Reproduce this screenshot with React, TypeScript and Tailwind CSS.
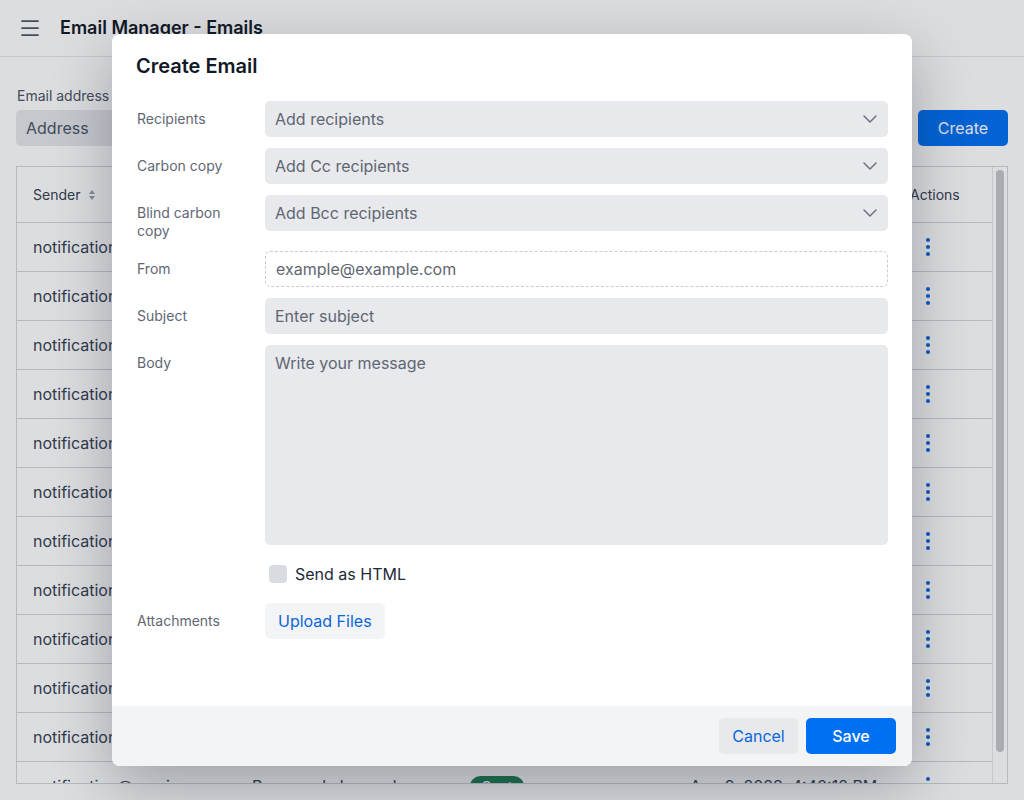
import React from "react";
import { ChevronDown, Menu } from "lucide-react";

const subjects = ["Welcome aboard", "Your weekly report", "Password changed"];

const rows = Array.from({ length: 12 }, (_, i) => ({
  sender: "notification@service.com",
  subject: subjects[i % 3],
  status: "Sent",
  date: `Aug 9, 2023, 4:${29 + i}:12 PM`,
}));

function SortIcon() {
  return (
    <svg width="8" height="12" viewBox="0 0 8 12" className="ml-2 text-gray-400">
      <path d="M4 1 L7 5 H1 Z" fill="currentColor" />
      <path d="M4 11 L7 7 H1 Z" fill="currentColor" />
    </svg>
  );
}

function Kebab() {
  return (
    <div className="flex flex-col items-center gap-[3px]">
      <span className="h-[4px] w-[4px] rounded-full bg-[#0066e0]" />
      <span className="h-[4px] w-[4px] rounded-full bg-[#0066e0]" />
      <span className="h-[4px] w-[4px] rounded-full bg-[#0066e0]" />
    </div>
  );
}

function SelectBox({ placeholder }: { placeholder: string }) {
  return (
    <div className="flex h-9 flex-1 items-center justify-between rounded-[5px] bg-[#e7e9ed] pl-2.5 pr-1.5">
      <span className="text-base text-[#5f6672]">{placeholder}</span>
      <ChevronDown size={24} strokeWidth={1.5} className="text-[#6b7280]" />
    </div>
  );
}

function FormRow({ label, children }: { label: string; children: React.ReactNode }) {
  return (
    <div className="flex items-start">
      <div className="w-[129px] shrink-0 pl-px pr-6 pt-[9px] text-sm leading-[18px] text-[#5f6774]">{label}</div>
      {children}
    </div>
  );
}

export default function App() {
  return (
    <div className="relative h-[800px] overflow-hidden bg-white font-['Inter',sans-serif] text-gray-800">
      {/* page header */}
      <header className="flex h-[57px] items-center border-b border-gray-200 pl-[18px]">
        <Menu size={24} strokeWidth={1.75} className="text-[#4b5563]" />
        <h1 className="ml-[18px] text-lg font-semibold text-[#111827]">Email Manager - Emails</h1>
      </header>

      <main className="px-4 pt-[29px]">
        <div className="flex items-end justify-between">
          <div className="flex flex-col">
            <label className="mb-1 pl-px text-sm leading-5 text-gray-600">Email address</label>
            <div className="flex h-9 w-[320px] items-center rounded-[5px] bg-[#e5e7eb] px-2.5 text-base text-gray-600">
              Address
            </div>
          </div>
          <button className="h-9 w-[90px] rounded-[5px] bg-[#0070f3] text-base text-white">Create</button>
        </div>

        {/* email list */}
        <div className="mt-5 flex h-[618px] overflow-hidden border border-gray-300">
          <div className="flex-1">
            <div className="grid h-[55px] grid-cols-[219px_218px_220px_220px_1fr] items-center text-sm text-gray-700">
              <div className="flex items-center pl-4">
                Sender
                <SortIcon />
              </div>
              <div className="pl-4">Subject</div>
              <div className="pl-4">Status</div>
              <div className="pl-4">Sent at</div>
              <div className="pl-4">Actions</div>
            </div>
            {rows.map((r, i) => (
              <div
                key={i}
                className="grid h-[49px] grid-cols-[219px_218px_220px_220px_1fr] items-center border-t border-gray-300 text-base text-gray-700"
              >
                <div className="truncate pl-4">{r.sender}</div>
                <div className="truncate pl-4">{r.subject}</div>
                <div className="pl-4">
                  <span className="rounded-full bg-[#1f7f55] px-3 py-0.5 text-sm font-medium text-white">{r.status}</span>
                </div>
                <div className="truncate pl-4">{r.date}</div>
                <div className="flex pl-[32px]">
                  <Kebab />
                </div>
              </div>
            ))}
          </div>
          {/* scrollbar */}
          <div className="w-[15px] shrink-0 border-l border-gray-200 pt-[3px] pl-[3px]">
            <div className="h-[582px] w-[8px] rounded-full bg-[#c4c6c8]" />
          </div>
        </div>
      </main>

      {/* create email dialog */}
      <div className="absolute inset-0 flex items-center justify-center bg-[rgba(17,24,39,0.15)]">
        <div className="-mt-px flex h-[732px] w-[800px] flex-col overflow-hidden rounded-lg bg-white shadow-[0_20px_60px_rgba(17,24,39,0.3)]">
          <div className="px-6 pt-[18px]">
            <h2 className="text-xl font-semibold leading-7 text-[#111827]">Create Email</h2>
          </div>

          <div className="mt-[21px] flex flex-col gap-[11px] px-6">
            <FormRow label="Recipients">
              <SelectBox placeholder="Add recipients" />
            </FormRow>
            <FormRow label="Carbon copy">
              <SelectBox placeholder="Add Cc recipients" />
            </FormRow>
            <FormRow label="Blind carbon copy">
              <SelectBox placeholder="Add Bcc recipients" />
            </FormRow>
            <FormRow label="From">
              <input
                className="h-9 flex-1 rounded-[5px] border border-dashed border-[#c8ccd2] bg-white px-2.5 text-base outline-none placeholder:text-[#5f6672]"
                placeholder="example@example.com"
              />
            </FormRow>
            <FormRow label="Subject">
              <input
                className="h-9 flex-1 rounded-[5px] bg-[#e7e9ed] px-2.5 text-base outline-none placeholder:text-[#5f6672]"
                placeholder="Enter subject"
              />
            </FormRow>
            <FormRow label="Body">
              <textarea
                className="h-[200px] flex-1 resize-none rounded-[5px] bg-[#e7e9ed] px-2.5 py-[6px] text-base outline-none placeholder:text-[#5f6672]"
                placeholder="Write your message"
              />
            </FormRow>
            <div className="flex h-9 items-center pl-[133px]">
              <span className="h-[18px] w-[18px] rounded-[4px] bg-[#d8dbe0]" />
              <span className="ml-2 text-base text-gray-800">Send as HTML</span>
            </div>
            <FormRow label="Attachments">
              <button className="h-9 rounded-[5px] bg-[#f3f4f6] px-[13px] text-base text-[#0b66d8]">Upload Files</button>
            </FormRow>
          </div>

          <div className="mt-auto flex h-[60px] items-center justify-end gap-2 bg-[#f3f4f6] px-4">
            <button className="h-9 w-[79px] rounded-[5px] bg-[#e7e9ed] text-base text-[#0b66d8]">Cancel</button>
            <button className="h-9 w-[90px] rounded-[5px] bg-[#0070f3] text-base font-medium text-white">Save</button>
          </div>
        </div>
      </div>
    </div>
  );
}
